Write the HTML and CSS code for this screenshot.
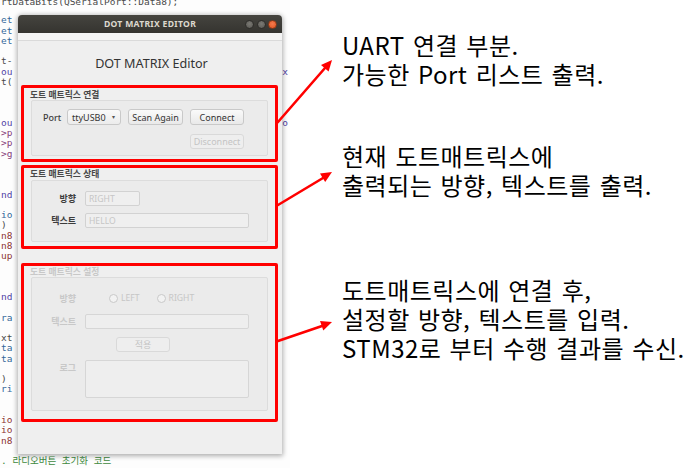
FILE: index.html
```html
<!DOCTYPE html>
<html lang="ko">
<head>
<meta charset="utf-8">
<title>DOT MATRIX Editor</title>
<link rel="stylesheet" href="styles.css">
</head>
<body>
<div class="page">
  <div class="shot">
    <div class="code">
      <div class="ln first c-dk">rtDataBits(QSerialPort::Data8);</div>
      <div class="ln c-bl">et</div>
      <div class="ln c-bl">et</div>
      <div class="ln c-bl">et</div>
      <div class="ln">&nbsp;</div>
      <div class="ln c-dk">t-</div>
      <div class="ln c-pu"><span>ou</span><span class="rt c-pu">x</span></div>
      <div class="ln c-dk">t(</div>
      <div class="ln">&nbsp;</div>
      <div class="ln">&nbsp;</div>
      <div class="ln">&nbsp;</div>
      <div class="ln c-pu"><span>ou</span><span class="rt c-pu">o</span></div>
      <div class="ln c-mg">&gt;p</div>
      <div class="ln c-mg">&gt;p</div>
      <div class="ln c-mg">&gt;g</div>
      <div class="ln">&nbsp;</div>
      <div class="ln">&nbsp;</div>
      <div class="ln">&nbsp;</div>
      <div class="ln c-pu">nd</div>
      <div class="ln">&nbsp;</div>
      <div class="ln c-bl">io</div>
      <div class="ln c-dk">)</div>
      <div class="ln c-rd">n8</div>
      <div class="ln c-rd">n8</div>
      <div class="ln c-rd">up</div>
      <div class="ln">&nbsp;</div>
      <div class="ln">&nbsp;</div>
      <div class="ln">&nbsp;</div>
      <div class="ln c-pu">nd</div>
      <div class="ln">&nbsp;</div>
      <div class="ln c-bl">ra</div>
      <div class="ln">&nbsp;</div>
      <div class="ln c-dk">xt</div>
      <div class="ln c-bl">ta</div>
      <div class="ln c-bl">ta</div>
      <div class="ln">&nbsp;</div>
      <div class="ln c-dk">)</div>
      <div class="ln c-bl">ri</div>
      <div class="ln">&nbsp;</div>
      <div class="ln">&nbsp;</div>
      <div class="ln c-rd">io</div>
      <div class="ln c-rd">io</div>
      <div class="ln c-rd">n8</div>
      <div class="ln">&nbsp;</div>
      <div class="ln c-gr">. 라디오버튼 초기화 코드</div>
    </div>

    <div class="window">
      <div class="titlebar">
        <span class="wtitle">DOT MATRIX EDITOR</span>
        <div class="wctrls">
          <span class="wdot"></span>
          <span class="wdot"></span>
          <span class="wdot close"></span>
        </div>
      </div>
      <div class="menubar"></div>
      <div class="content">
        <div class="heading">DOT MATRIX Editor</div>

        <section class="group g1">
          <div class="gtitle">도트 매트릭스 연결</div>
          <div class="gframe conn">
            <span class="lbl plain">Port</span>
            <span class="combo">ttyUSB0<span class="caret">&#9662;</span></span>
            <span class="btn">Scan Again</span>
            <span class="btn">Connect</span>
            <span class="btn disabled disc">Disconnect</span>
          </div>
        </section>

        <section class="group g2">
          <div class="gtitle">도트 매트릭스 상태</div>
          <div class="gframe form st">
            <span class="lbl">방향</span>
            <span class="field short">RIGHT</span>
            <span class="lbl">텍스트</span>
            <span class="field">HELLO</span>
          </div>
        </section>

        <section class="group g3 off">
          <div class="gtitle">도트 매트릭스 설정</div>
          <div class="gframe form set">
            <span class="lbl">방향</span>
            <div class="radios">
              <span class="radio"><span class="rcircle"></span>LEFT</span>
              <span class="radio"><span class="rcircle"></span>RIGHT</span>
            </div>
            <span class="lbl">텍스트</span>
            <span class="field"></span>
            <span></span>
            <div class="applyrow"><span class="btn disabled apply">적용</span></div>
            <span class="lbl top">로그</span>
            <span class="field log"></span>
          </div>
        </section>
      </div>
    </div>
  </div>

  <div class="notes">
    <p class="note n1">UART 연결 부분.<br>가능한 Port 리스트 출력.</p>
    <p class="note n2">현재 도트매트릭스에<br>출력되는 방향, 텍스트를 출력.</p>
    <p class="note n3">도트매트릭스에 연결 후,<br>설정할 방향, 텍스트를 입력.<br>STM32로 부터 수행 결과를 수신.</p>
  </div>

  <div class="mark mk1"></div>
  <div class="mark mk2"></div>
  <div class="mark mk3"></div>

  <svg class="arrows" width="699" height="470" viewBox="0 0 699 470" aria-hidden="true">
    <g stroke="#f00" stroke-width="2.6" stroke-linecap="round" fill="none">
      <line x1="278" y1="122" x2="325" y2="68"/>
      <line x1="278" y1="205" x2="323" y2="178"/>
      <line x1="278" y1="341" x2="322" y2="326"/>
    </g>
    <g fill="#f00">
      <polygon points="332,60 328.6,71.6 321.0,65.0"/>
      <polygon points="332,172 325.2,182.0 320.0,173.4"/>
      <polygon points="332,322 323.3,330.4 320.0,321.0"/>
    </g>
  </svg>
</div>
</body>
</html>
```

FILE: styles.css
```css
* { box-sizing: border-box; }

html, body {
  margin: 0;
  padding: 0;
  background: #ffffff;
}

.page {
  position: relative;
  width: 699px;
  height: 470px;
  overflow: hidden;
  display: flex;
  flex-direction: row;
  font-family: "Noto Sans", "Noto Sans CJK KR", sans-serif;
}

/* ---------- screenshot (left) ---------- */
.shot {
  position: relative;
  flex: 0 0 290px;
  height: 468px;
  background: #fdfdfd;
  overflow: hidden;
}

.code {
  padding-top: 5px;
  font-family: "DejaVu Sans Mono", "Noto Sans CJK KR", monospace;
  font-size: 9.5px;
  line-height: 10.25px;
  font-weight: normal;
}

.ln {
  display: flex;
  justify-content: space-between;
  white-space: nowrap;
  padding-left: 1px;
  padding-right: 2px;
}

.ln.first {
  margin-top: -8px;
  margin-bottom: 8px;
}

.c-dk { color: #4a4a4a; }
.c-bl { color: #35689a; }
.c-pu { color: #5244a6; }
.c-mg { color: #86407a; }
.c-rd { color: #8c3434; }
.c-gr { color: #3d8a3d; }

/* ---------- window ---------- */
.window {
  position: absolute;
  left: 18px;
  top: 15px;
  width: 264px;
  height: 439px;
  background: #efefef;
  border-radius: 4px 4px 0 0;
  box-shadow: 0 1px 5px 1px rgba(0, 0, 0, 0.32);
  display: flex;
  flex-direction: column;
}

.titlebar {
  position: relative;
  height: 18px;
  flex: 0 0 18px;
  background: linear-gradient(#45443f, #353430);
  border-radius: 4px 4px 0 0;
  display: flex;
  align-items: center;
  justify-content: center;
}

.wtitle {
  color: #dcd8cf;
  font-size: 8.6px;
  font-weight: 700;
  letter-spacing: 0.3px;
}

.wctrls {
  position: absolute;
  right: 5px;
  top: 5px;
  display: flex;
  gap: 2.5px;
}

.wdot {
  width: 9px;
  height: 9px;
  border-radius: 50%;
  background: radial-gradient(circle at 50% 40%, #7a7974, #585752);
  border: 1px solid #2e2d2a;
}

.wdot.close {
  background: radial-gradient(circle at 50% 40%, #f47a4e, #e4531f);
  border-color: #8a3a1a;
}

.menubar {
  height: 8px;
  flex: 0 0 8px;
  background: #f4f4f4;
  border-bottom: 1px solid #dadada;
}

.content {
  flex: 1;
  display: flex;
  flex-direction: column;
  padding: 0 14px 0 13px;
}

.heading {
  margin-top: 15px;
  text-align: center;
  font-size: 12.6px;
  line-height: 16px;
  color: #333333;
  padding-left: 4px;
}

.group { display: flex; flex-direction: column; }
.g1 { margin-top: 18px; }
.g2 { margin-top: 13px; }
.g3 { margin-top: 25px; }

.gtitle {
  font-size: 8.8px;
  line-height: 10px;
  font-weight: 600;
  color: #484848;
  margin-left: -1px;
}
.g2 .gtitle { margin-bottom: 1px; }

.gframe {
  border: 1px solid #dcdcdc;
  background: #ebebeb;
  border-radius: 2px;
}

/* connection group */
.conn {
  height: 56px;
  padding: 8px 0 0 11px;
  display: grid;
  grid-template-columns: 17px 54px 55px 54px;
  grid-template-rows: 16px 15px;
  column-gap: 7px;
  row-gap: 9px;
  align-items: center;
}

.lbl {
  font-size: 9px;
  color: #3c3c3c;
  font-weight: 700;
  text-align: right;
  white-space: nowrap;
}
.lbl.plain { font-weight: 500; text-align: left; }
.lbl.top { align-self: start; padding-top: 1px; }

.combo {
  height: 16px;
  border: 1px solid #c9c9c9;
  border-radius: 3px;
  background: linear-gradient(#fafafa, #ececec);
  font-size: 9px;
  color: #333;
  display: flex;
  align-items: center;
  justify-content: space-between;
  padding: 0 5px 0 4px;
}

.caret { font-size: 6px; color: #555; }

.btn {
  height: 16px;
  border: 1px solid #c9c9c9;
  border-radius: 3px;
  background: linear-gradient(#fafafa, #e9e9e9);
  font-size: 9px;
  color: #333;
  display: flex;
  align-items: center;
  justify-content: center;
  white-space: nowrap;
}

.btn.disabled {
  color: #c4c4c4;
  border-color: #d9d9d9;
  background: #eeeeee;
  height: 15px;
}

.disc { grid-column: 4; grid-row: 2; }

/* form groups */
.form {
  display: grid;
  grid-template-columns: 30px 1fr;
  column-gap: 9px;
  align-items: center;
  padding-left: 14px;
  padding-right: 18px;
}

.st {
  height: 62px;
  grid-template-rows: 15px 15px;
  row-gap: 7px;
  align-content: start;
  padding-top: 10px;
}

.field {
  height: 15px;
  border: 1px solid #d2d2d2;
  border-radius: 2px;
  background: #efefef;
  font-size: 8.6px;
  color: #c6c6c6;
  display: flex;
  align-items: center;
  padding-left: 3px;
}
.field.short { width: 55px; }

.set {
  height: 134px;
  grid-template-rows: 16px 15px 15px 38px;
  align-content: start;
  row-gap: 8px;
  padding-top: 12px;
}

.off .gtitle,
.off .lbl { color: #c8c8c8; }

.off .field { background: #eeeeee; border-color: #d6d6d6; }

.radios {
  display: flex;
  align-items: center;
  gap: 17px;
  padding-left: 24px;
}

.radio {
  display: flex;
  align-items: center;
  gap: 3px;
  font-size: 8.6px;
  color: #c6c6c6;
}

.rcircle {
  width: 9px;
  height: 9px;
  border: 1px solid #c9c9c9;
  border-radius: 50%;
  background: #f2f2f2;
}

.applyrow { display: flex; padding-left: 31px; }
.apply { width: 54px; }

.field.log { height: 38px; }

/* ---------- notes (right) ---------- */
.notes {
  flex: 1;
  padding-left: 52px;
  padding-top: 30px;
  display: flex;
  flex-direction: column;
  font-family: "Noto Sans CJK KR", "Noto Sans", sans-serif;
  color: #000;
}

.note {
  margin: 0;
  font-size: 24px;
  line-height: 29px;
  letter-spacing: 0.5px;
  word-spacing: 1px;
  white-space: nowrap;
}
.n2 { margin-top: 53px; }
.n3 { margin-top: 76px; }

/* ---------- annotation overlays ---------- */
.mark {
  position: absolute;
  left: 21px;
  width: 257px;
  border: 3px solid #ff0000;
  border-radius: 2px;
}
.mk1 { top: 85px; height: 77px; }
.mk2 { top: 165px; height: 84px; }
.mk3 { top: 263px; height: 159px; }

.arrows {
  position: absolute;
  left: 0;
  top: 0;
  pointer-events: none;
}
```
